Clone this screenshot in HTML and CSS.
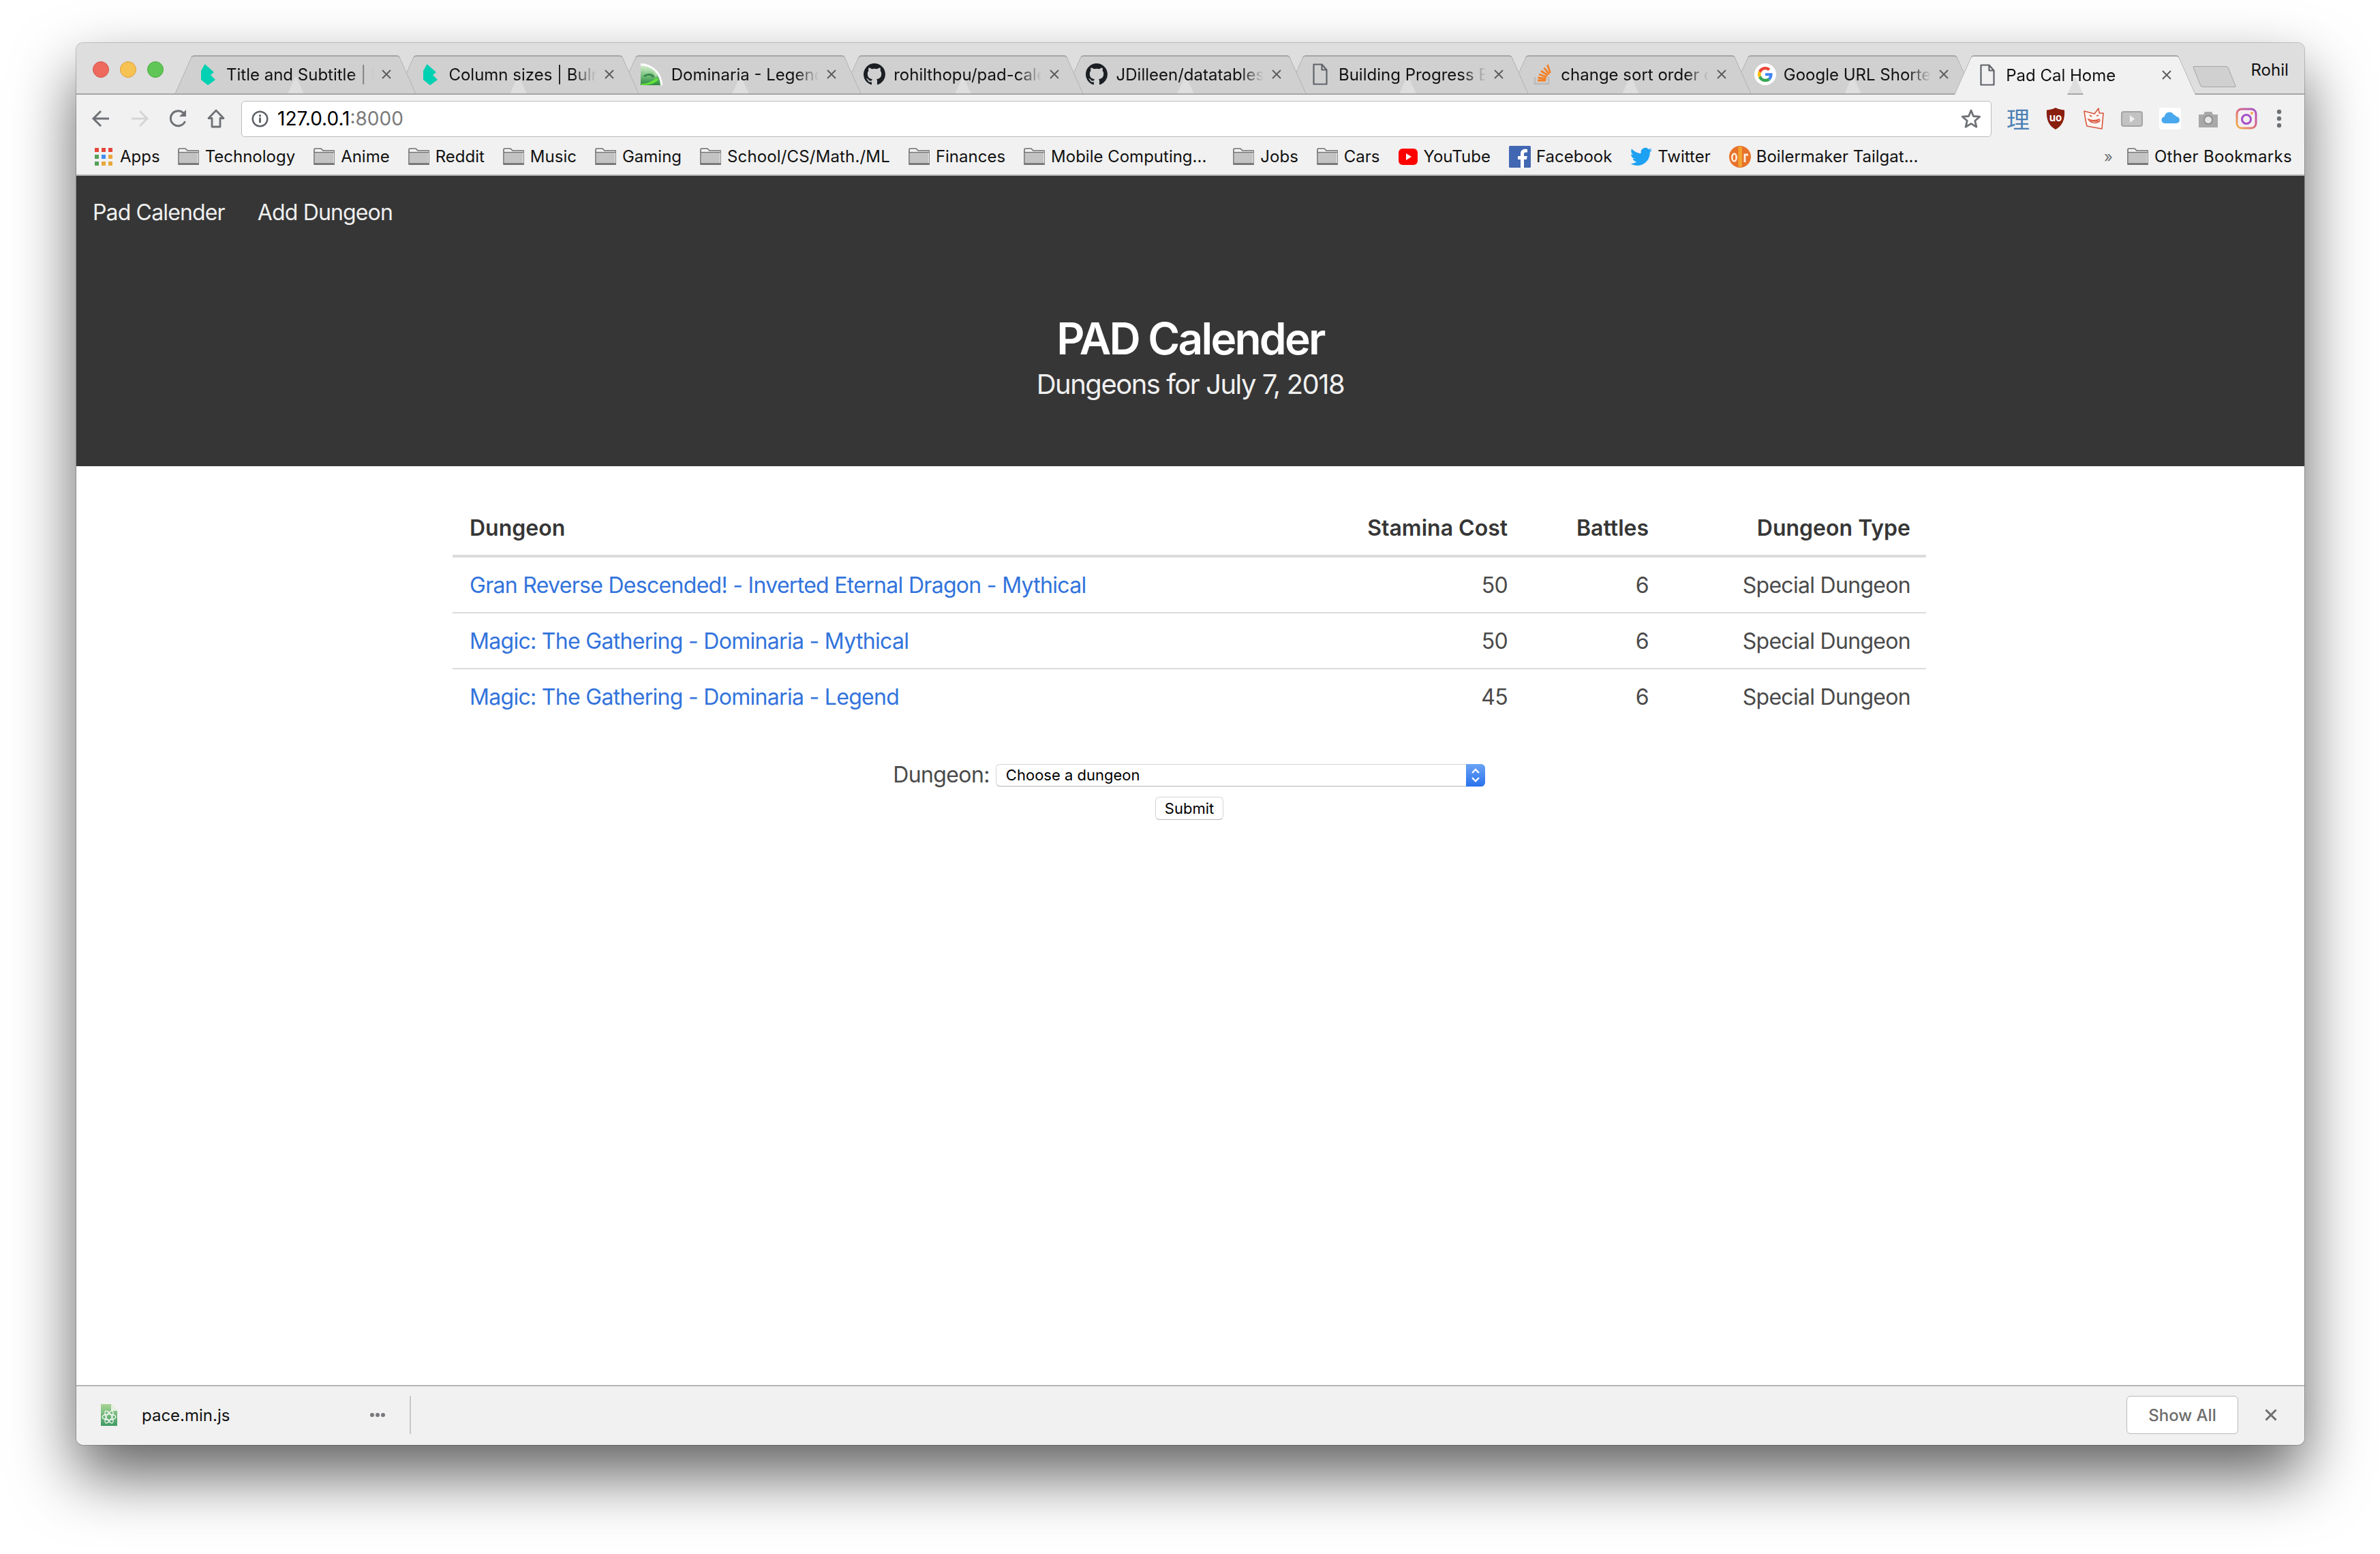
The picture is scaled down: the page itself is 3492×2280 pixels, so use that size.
FILE: index.html
```html
<!DOCTYPE html>
<html lang="en">
<head>
<meta charset="utf-8">
<title>Pad Cal Home</title>
<link rel="stylesheet" href="styles.css">
</head>
<body>
<svg class="defs" width="0" height="0">
  <defs>
    <symbol id="folder" viewBox="0 0 31 25">
      <path d="M1 24V2.500C1 1.600 1.600 1 2.500 1h8.500l3 3h15.500c.8 0 1.500.7 1.500 1.500V24z" fill="#f4f4f4" stroke="#6d6d6d" stroke-width="1.600"/>
      <rect x="1.800" y="7" width="27.400" height="16" fill="#c3c3c3"/>
      <path d="M1 6.500h29" stroke="#6d6d6d" stroke-width="1.300"/>
      <path d="M1 23.500h29.200" stroke="#6d6d6d" stroke-width="2.400"/>
    </symbol>
    <symbol id="bulma" viewBox="0 0 21 31">
      <path d="M5.500 0L19 12l-5 4 7 7-11 8L0 23V10z" fill="#00d1b2"/>
    </symbol>
    <symbol id="github" viewBox="0 0 16 16">
      <path fill="#1b1f23" fill-rule="evenodd" d="M8 0C3.580 0 0 3.580 0 8c0 3.540 2.290 6.530 5.470 7.590.4.070.55-.17.55-.38 0-.19-.01-.82-.01-1.490-2.010.37-2.530-.49-2.690-.94-.09-.23-.48-.94-.82-1.130-.28-.15-.68-.52-.01-.53.63-.01 1.080.58 1.230.82.72 1.210 1.870.87 2.330.66.070-.52.28-.87.51-1.070-1.780-.2-3.640-.89-3.640-3.950 0-.87.31-1.590.82-2.150-.08-.2-.36-1.020.08-2.120 0 0 .67-.21 2.200.82.64-.18 1.320-.27 2-.27.68 0 1.360.09 2 .27 1.530-1.040 2.200-.82 2.200-.82.44 1.100.16 1.920.08 2.120.51.56.82 1.270.82 2.150 0 3.070-1.870 3.750-3.650 3.950.29.25.54.73.54 1.480 0 1.070-.01 1.930-.01 2.200 0 .21.15.46.55.38A8.013 8.013 0 0016 8c0-4.420-3.580-8-8-8z"/>
    </symbol>
    <symbol id="doc" viewBox="0 0 22 32">
      <path d="M1.500 1.500h12l7 8v21h-19z M13.500 1.500v8h7" fill="none" stroke="#5f6368" stroke-width="2.200" stroke-linejoin="round"/>
    </symbol>
    <symbol id="tabx" viewBox="0 0 14 14">
      <path d="M1 1l12 12M13 1L1 13" stroke="#5a5a5a" stroke-width="1.800" fill="none"/>
    </symbol>
    <linearGradient id="swirl" x1="0" y1="0" x2="0" y2="1">
      <stop offset="0" stop-color="#d7efd0"/>
      <stop offset=".4" stop-color="#8ccb8e"/>
      <stop offset=".75" stop-color="#4fa45c"/>
      <stop offset="1" stop-color="#2f8a3f"/>
    </linearGradient>
    <linearGradient id="atomdoc" x1="0" y1="0" x2="0" y2="1">
      <stop offset="0" stop-color="#a8d595"/>
      <stop offset="1" stop-color="#3f9a63"/>
    </linearGradient>
    <linearGradient id="insta" x1="0" y1="1" x2="1" y2="0">
      <stop offset="0" stop-color="#f5b44a"/>
      <stop offset=".5" stop-color="#dc6a80"/>
      <stop offset="1" stop-color="#a650c8"/>
    </linearGradient>
  </defs>
</svg>

<div class="window">
  <header class="titlebar">
    <div class="lights">
      <span class="light light-red"></span>
      <span class="light light-yellow"></span>
      <span class="light light-green"></span>
    </div>
    <div class="tabs">
      <div class="tab">
        <span class="fav"><svg class="fav-bulma"><use href="#bulma"/></svg></span>
        <span class="tab-title">Title and Subtitle | Bulma</span>
        <svg class="tab-close"><use href="#tabx"/></svg>
      </div>
      <div class="tab">
        <span class="fav"><svg class="fav-bulma"><use href="#bulma"/></svg></span>
        <span class="tab-title">Column sizes | Bulma: Free</span>
        <svg class="tab-close"><use href="#tabx"/></svg>
      </div>
      <div class="tab">
        <span class="fav"><svg class="fav-full fav-dominaria" viewBox="0 0 32 32"><path d="M0 0A32 32 0 0 1 32 32H0z" fill="#fff"/><path d="M0 3A29 29 0 0 1 29 32H0z" fill="url(#swirl)"/><path d="M6 10c8-3 15 1 17 9" fill="none" stroke="#b5deb0" stroke-width="3"/><path d="M5 19c6-4 11-3 14 1" fill="none" stroke="#37874a" stroke-width="3"/><path d="M1 30c8 0 16-3 22-9l3 3c-5 5-11 8-25 8z" fill="#63e33c"/></svg></span>
        <span class="tab-title">Dominaria - Legend - PAD</span>
        <svg class="tab-close"><use href="#tabx"/></svg>
      </div>
      <div class="tab">
        <span class="fav"><svg class="fav-full fav-github"><use href="#github"/></svg></span>
        <span class="tab-title">rohilthopu/pad-calender</span>
        <svg class="tab-close"><use href="#tabx"/></svg>
      </div>
      <div class="tab">
        <span class="fav"><svg class="fav-full fav-github"><use href="#github"/></svg></span>
        <span class="tab-title">JDilleen/datatables-plugin</span>
        <svg class="tab-close"><use href="#tabx"/></svg>
      </div>
      <div class="tab">
        <span class="fav"><svg class="fav-doc"><use href="#doc"/></svg></span>
        <span class="tab-title">Building Progress Bar</span>
        <svg class="tab-close"><use href="#tabx"/></svg>
      </div>
      <div class="tab">
        <span class="fav"><svg class="fav-full" viewBox="0 0 32 32"><path d="M5 20v10h20V20" fill="none" stroke="#bcbbbb" stroke-width="2.600"/><path d="M9 25h12M9.500 21l12 1.500M11 16l11.500 4M14 11l10 6.500M18.500 6.500l7.500 9.500M23.500 2l4 12" stroke="#f48024" stroke-width="2.800" fill="none"/></svg></span>
        <span class="tab-title">change sort order of</span>
        <svg class="tab-close"><use href="#tabx"/></svg>
      </div>
      <div class="tab">
        <span class="fav"><svg class="fav-full" viewBox="0 0 32 32"><circle cx="16" cy="16" r="16" fill="#fff"/><g transform="translate(5 5) scale(.46)"><path fill="#EA4335" d="M24 9.500c3.500 0 6.700 1.200 9.200 3.600l6.900-6.900C35.900 2.400 30.500 0 24 0 14.600 0 6.500 5.400 2.600 13.200l8 6.200C12.400 13.700 17.700 9.500 24 9.500z"/><path fill="#4285F4" d="M47 24.500c0-1.600-.1-3.100-.4-4.500H24v9h12.900c-.6 3-2.200 5.500-4.700 7.200l7.700 6c4.500-4.200 7.100-10.300 7.100-17.700z"/><path fill="#FBBC05" d="M10.500 28.600c-.5-1.400-.8-3-.8-4.600s.3-3.200.8-4.600l-8-6.200C.9 16.500 0 20.100 0 24s.9 7.500 2.600 10.800l7.900-6.200z"/><path fill="#34A853" d="M24 48c6.500 0 11.900-2.100 15.900-5.800l-7.700-6c-2.200 1.400-4.900 2.300-8.200 2.300-6.300 0-11.600-4.200-13.500-9.900l-8 6.200C6.500 42.600 14.600 48 24 48z"/></g></svg></span>
        <span class="tab-title">Google URL Shortener</span>
        <svg class="tab-close"><use href="#tabx"/></svg>
      </div>
      <div class="tab tab-active">
        <span class="fav"><svg class="fav-doc"><use href="#doc"/></svg></span>
        <span class="tab-title">Pad Cal Home</span>
        <svg class="tab-close"><use href="#tabx"/></svg>
      </div>
    </div>
    <span class="new-tab"></span>
    <span class="profile">Rohil</span>
  </header>

  <div class="toolbar">
    <div class="nav-icons">
      <svg class="nav-icon" viewBox="0 0 28 28"><path d="M26 14H4M14 3L3 14l11 11" fill="none" stroke="#6e7175" stroke-width="3"/></svg>
      <svg class="nav-icon" viewBox="0 0 28 28"><path d="M2 14h22M14 3l11 11-11 11" fill="none" stroke="#d5d5d5" stroke-width="3"/></svg>
      <svg class="nav-icon" viewBox="0 0 28 28"><path d="M23.500 18a11 11 0 1 1-1-10.500" fill="none" stroke="#6e7175" stroke-width="3"/><path d="M25 1v10H15z" fill="#6e7175"/></svg>
      <svg class="nav-icon nav-home" viewBox="0 0 28 28"><path d="M14 2L3 13.500h5V26h12V13.500h5z" fill="none" stroke="#6e7175" stroke-width="2.800" stroke-linejoin="round"/></svg>
    </div>
    <div class="omnibox">
      <svg class="info" viewBox="0 0 26 26"><circle cx="13" cy="13" r="11.200" fill="none" stroke="#5f6368" stroke-width="2.600"/><path d="M11.500 11h3v8h-3zM11.500 6.500h3v3h-3z" fill="#5f6368"/></svg>
      <span class="url">127.0.0.1<span class="url-port">:8000</span></span>
      <svg class="star" viewBox="0 0 30 30"><path d="M15 3l3.500 8.500 9.200.7-7 6 2.200 9L15 22.400 7.100 27.200l2.200-9-7-6 9.200-.7z" fill="none" stroke="#6e7175" stroke-width="2.800" stroke-linejoin="round"/></svg>
    </div>
    <div class="extensions">
      <span class="ext ext-li">理</span>
      <svg class="ext" viewBox="0 0 32 32"><path d="M16 0c3 2 8 3 13 3.500 1 14-3 23-13 28.500C6 26.500 2 17.500 3 3.500 8 3 13 2 16 0z" fill="#8a1f0f"/><text class="ub-text" x="16" y="20" text-anchor="middle">uo</text></svg>
      <svg class="ext" viewBox="0 0 32 32"><path d="M2 5l15 4 6-8 1 7 6 0-2 23-22-4C4 20 3 12 2 5z" fill="#fdf6f3" stroke="#d8563f" stroke-width="1.600" stroke-linejoin="round"/><path d="M8 17c3 6 13 7 17 2l-1-2c-5 2-11 2-16 0zM10 20l13-.5" stroke="#d8563f" stroke-width="1.400" fill="none"/><path d="M10 11l3 2M20 12l3-1" stroke="#d8563f" stroke-width="1.800" fill="none"/></svg>
      <svg class="ext" viewBox="0 0 32 32"><rect x="1" y="6" width="30" height="21" rx="3" fill="#c3c3c3" stroke="#a4a4a4" stroke-width="2"/><path d="M13 11l7 5.500-7 5.500z" fill="#f2f2f2"/></svg>
      <svg class="ext" viewBox="0 0 32 32"><rect width="32" height="32" rx="4" fill="#fff"/><path d="M9 23a5 5 0 0 1-1-10 7 7 0 0 1 13-3 6 6 0 0 1 4 3 5 5 0 0 1 0 10z" fill="#4aa8ee"/></svg>
      <svg class="ext" viewBox="0 0 32 32"><path d="M2 10h7l2-4h10l2 4h7v19H2z" fill="#a8a8a8"/><circle cx="16" cy="18" r="6" fill="#e6e6e6" stroke="#8e8e8e" stroke-width="2"/></svg>
      <svg class="ext" viewBox="0 0 32 32"><rect x="2" y="2" width="28" height="28" rx="7" fill="#f4f0f2" stroke="url(#insta)" stroke-width="3"/><circle cx="16" cy="17" r="6.500" fill="none" stroke="#a650c8" stroke-width="3"/><circle cx="24" cy="8" r="2" fill="#f5a742"/></svg>
      <svg class="ext-menu" viewBox="0 0 16 28"><circle cx="8" cy="4" r="3.200" fill="#6e7175"/><circle cx="8" cy="14" r="3.200" fill="#6e7175"/><circle cx="8" cy="24" r="3.200" fill="#6e7175"/></svg>
    </div>
  </div>

  <nav class="bookmarks">
    <a class="bm bm-first"><svg class="bm-apps" viewBox="0 0 26 26"><g><rect x="0" y="0" width="6" height="6" fill="#e5473a"/><rect x="10" y="0" width="6" height="6" fill="#e5473a"/><rect x="20" y="0" width="6" height="6" fill="#e5473a"/><rect x="0" y="10" width="6" height="6" fill="#55a05a"/><rect x="10" y="10" width="6" height="6" fill="#3f8ef0"/><rect x="20" y="10" width="6" height="6" fill="#e8a73a"/><rect x="0" y="20" width="6" height="6" fill="#55a05a"/><rect x="10" y="20" width="6" height="6" fill="#e8a73a"/><rect x="20" y="20" width="6" height="6" fill="#e8a73a"/></g></svg>Apps</a>
    <a class="bm"><svg class="bm-folder"><use href="#folder"/></svg>Technology</a>
    <a class="bm"><svg class="bm-folder"><use href="#folder"/></svg>Anime</a>
    <a class="bm"><svg class="bm-folder"><use href="#folder"/></svg>Reddit</a>
    <a class="bm"><svg class="bm-folder"><use href="#folder"/></svg>Music</a>
    <a class="bm"><svg class="bm-folder"><use href="#folder"/></svg>Gaming</a>
    <a class="bm bm-school"><svg class="bm-folder"><use href="#folder"/></svg>School/CS/Math./ML</a>
    <a class="bm"><svg class="bm-folder"><use href="#folder"/></svg>Finances</a>
    <a class="bm bm-wide"><svg class="bm-folder"><use href="#folder"/></svg>Mobile Computing...</a>
    <a class="bm"><svg class="bm-folder"><use href="#folder"/></svg>Jobs</a>
    <a class="bm"><svg class="bm-folder"><use href="#folder"/></svg>Cars</a>
    <a class="bm"><svg class="bm-yt" viewBox="0 0 28 24"><rect width="28" height="24" rx="6" fill="#f00"/><path d="M11 7l8 5-8 5z" fill="#fff"/></svg>YouTube</a>
    <a class="bm"><svg class="bm-icon" viewBox="0 0 32 32"><rect width="32" height="32" rx="1.500" fill="#4267b2"/><path d="M22 32V20h4l.7-5H22v-3c0-1.500.6-2.500 2.500-2.500H27V5c-.8-.1-2-.2-3.500-.2-3.600 0-6.500 2.200-6.500 6.500V15h-4v5h4v12z" fill="#fff"/></svg>Facebook</a>
    <a class="bm"><svg class="bm-icon" viewBox="0 0 24 24"><path fill="#1da1f2" d="M23.953 4.570a10 10 0 01-2.825.775 4.958 4.958 0 002.163-2.723c-.951.555-2.005.959-3.127 1.184a4.920 4.920 0 00-8.384 4.482C7.690 8.095 4.067 6.130 1.640 3.162a4.822 4.822 0 00-.666 2.475c0 1.710.870 3.213 2.188 4.096a4.904 4.904 0 01-2.228-.616v.060a4.923 4.923 0 003.946 4.827 4.996 4.996 0 01-2.212.085 4.936 4.936 0 004.604 3.417 9.867 9.867 0 01-6.102 2.105c-.390 0-.779-.023-1.170-.067a13.995 13.995 0 007.557 2.209c9.053 0 13.998-7.496 13.998-13.985 0-.210 0-.420-.015-.630A9.935 9.935 0 0024 4.590z"/></svg>Twitter</a>
    <a class="bm"><svg class="bm-icon" viewBox="0 0 32 32"><circle cx="16" cy="16" r="16" fill="#e8722a"/><rect x="13.500" y="1" width="5.500" height="30" rx="2" fill="#f2a531"/><ellipse cx="7.500" cy="17" rx="3.200" ry="5.500" fill="none" stroke="#fdeede" stroke-width="2.600"/><path d="M23 24V13h5" fill="none" stroke="#fdeede" stroke-width="2.800"/></svg>Boilermaker Tailgat...</a>
    <span class="bm-more">»</span>
    <a class="bm bm-last"><svg class="bm-folder"><use href="#folder"/></svg>Other Bookmarks</a>
  </nav>

  <main class="page">
    <section class="hero">
      <div class="hero-nav">
        <a class="hero-link">Pad Calender</a>
        <a class="hero-link">Add Dungeon</a>
      </div>
      <div class="hero-body">
        <h1 class="hero-title">PAD Calender</h1>
        <h2 class="hero-subtitle">Dungeons for July 7, 2018</h2>
      </div>
    </section>

    <section class="content">
      <table class="dungeons">
        <colgroup>
          <col class="col-name">
          <col class="col-stamina">
          <col class="col-battles">
          <col class="col-type">
        </colgroup>
        <thead>
          <tr>
            <th>Dungeon</th>
            <th class="num">Stamina Cost</th>
            <th class="num">Battles</th>
            <th class="num">Dungeon Type</th>
          </tr>
        </thead>
        <tbody>
          <tr>
            <td><a class="link">Gran Reverse Descended! - Inverted Eternal Dragon - Mythical</a></td>
            <td class="num">50</td>
            <td class="num">6</td>
            <td class="num">Special Dungeon</td>
          </tr>
          <tr>
            <td><a class="link">Magic: The Gathering - Dominaria - Mythical</a></td>
            <td class="num">50</td>
            <td class="num">6</td>
            <td class="num">Special Dungeon</td>
          </tr>
          <tr>
            <td><a class="link">Magic: The Gathering - Dominaria - Legend</a></td>
            <td class="num">45</td>
            <td class="num">6</td>
            <td class="num">Special Dungeon</td>
          </tr>
        </tbody>
      </table>

      <form class="pick">
        <div class="pick-row">
          <label class="pick-label" for="dungeon">Dungeon:</label>
          <span class="select-wrap">
            <select class="select" id="dungeon"><option>Choose a dungeon</option></select>
            <svg class="select-arrows" viewBox="0 0 28 33"><path d="M9 13l5-5 5 5M9 20l5 5 5-5" fill="none" stroke="#fff" stroke-width="2.400"/></svg>
          </span>
        </div>
        <button class="submit" type="button">Submit</button>
      </form>
    </section>
  </main>

  <footer class="downloads">
    <svg class="dl-icon" viewBox="0 0 24 32"><path d="M0 0h15l9 10v22H0z" fill="url(#atomdoc)"/><path d="M15 0l9 10h-9z" fill="#e6efe2"/><g fill="none" stroke="#fff" stroke-width="1.200"><ellipse cx="12" cy="19" rx="10" ry="4"/><ellipse cx="12" cy="19" rx="10" ry="4" transform="rotate(60 12 19)"/><ellipse cx="12" cy="19" rx="10" ry="4" transform="rotate(120 12 19)"/></g></svg>
    <span class="dl-name">pace.min.js</span>
    <svg class="dl-more" viewBox="0 0 22 6"><circle cx="3" cy="3" r="3" fill="#77797c"/><circle cx="11" cy="3" r="3" fill="#77797c"/><circle cx="19" cy="3" r="3" fill="#77797c"/></svg>
    <span class="dl-sep"></span>
    <button class="show-all" type="button">Show All</button>
    <svg class="dl-close" viewBox="0 0 18 18"><path d="M1.500 1.500l15 15M16.500 1.500l-15 15" stroke="#6e6e6e" stroke-width="3" fill="none"/></svg>
  </footer>
</div>
</body>
</html>
```

FILE: styles.css
```css
* { box-sizing: border-box; }

html, body {
  margin: 0;
  padding: 0;
  background: #fff;
  width: 3492px;
  height: 2280px;
  overflow: hidden;
}

body {
  padding: 63px 0 0 112px;
  font-family: Inter, "Liberation Sans", sans-serif;
  color: #000;
}

.defs { position: absolute; }

.window {
  width: 3269px;
  height: 2057px;
  display: flex;
  flex-direction: column;
  border-radius: 10px;
  background: #f1f1f1;
  box-shadow: 0 0 0 1px rgba(0, 0, 0, .2), 0 44px 92px rgba(0, 0, 0, .62);
}

/* title bar */
.titlebar {
  height: 76px;
  flex: none;
  display: flex;
  align-items: flex-end;
  background: #dedede;
  border-bottom: 2px solid #a6a6a6;
  border-radius: 10px 10px 0 0;
}

.lights {
  display: flex;
  gap: 16px;
  align-self: flex-start;
  margin: 27px 16px 0 24px;
}

.light {
  width: 24px;
  height: 24px;
  border-radius: 50%;
}
.light-red { background: #ee6a5f; border: 1px solid #d4544b; }
.light-yellow { background: #f6c251; border: 1px solid #dca03c; }
.light-green { background: #60c655; border: 1px solid #4aa93f; }

.tabs { display: flex; }

.tab {
  position: relative;
  width: 354.400px;
  height: 56px;
  margin-right: -28px;
  padding: 0 31px 0 33px;
  display: flex;
  align-items: center;
  font-size: 24px;
  isolation: isolate;
}
.tab:nth-child(1) { z-index: 8; }
.tab:nth-child(2) { z-index: 7; }
.tab:nth-child(3) { z-index: 6; }
.tab:nth-child(4) { z-index: 5; }
.tab:nth-child(5) { z-index: 4; }
.tab:nth-child(6) { z-index: 3; }
.tab:nth-child(7) { z-index: 2; }
.tab:nth-child(8) { z-index: 1; }
.tab.tab-active { z-index: 9; height: 58px; margin-bottom: -2px; }

.tab::before,
.tab::after {
  content: "";
  position: absolute;
  top: 0;
  bottom: 0;
  z-index: -1;
  background: #d0d0d0;
  border-top: 2px solid #a5a5a5;
}
.tab::before {
  left: 12.500px;
  right: calc(50% - 1px);
  transform: skewX(-24deg);
  border-left: 1.500px solid #a5a5a5;
  border-top-left-radius: 4px;
}
.tab::after {
  left: 50%;
  right: 12.500px;
  transform: skewX(24deg);
  border-right: 1.500px solid #a5a5a5;
  border-top-right-radius: 4px;
}
.tab-active::before,
.tab-active::after { background: #f1f1f1; }

.fav {
  width: 32px;
  height: 32px;
  flex: none;
  margin-right: 11px;
  display: flex;
  align-items: center;
  justify-content: center;
}
.fav-bulma { width: 21px; height: 31px; }
.fav-full { width: 32px; height: 32px; }
.fav-dominaria { margin-left: -3px; flex: none; }
.fav-github { margin-left: -3px; flex: none; }
.fav-doc { width: 22px; height: 32px; }

.tab-title {
  flex: 1;
  min-width: 0;
  overflow: hidden;
  white-space: nowrap;
  color: #111;
  -webkit-mask-image: linear-gradient(to right, #000 calc(100% - 34px), transparent);
  mask-image: linear-gradient(to right, #000 calc(100% - 34px), transparent);
}

.tab-close {
  width: 14px;
  height: 14px;
  flex: none;
  margin: 0 5px 0 12px;
}

.new-tab {
  width: 52px;
  height: 31px;
  flex: none;
  margin: 0 0 9px 29px;
  background: #d0d0d0;
  border: 1.500px solid #a5a5a5;
  border-radius: 3px;
  transform: skewX(22deg);
}

.profile {
  align-self: flex-start;
  margin: 25px 0 0 28px;
  font-size: 24px;
  line-height: 30px;
  color: #111;
}

/* toolbar */
.toolbar {
  height: 69px;
  flex: none;
  display: flex;
  align-items: center;
  padding: 1px 29px 0 22px;
  background: #f1f1f1;
}

.nav-icons { display: flex; gap: 29px; }
.nav-icon { width: 28px; height: 28px; }
.nav-home { margin-left: -2px; }

.omnibox {
  flex: 1;
  height: 53px;
  margin: 0 22px 0 23px;
  padding: 0 14px;
  display: flex;
  align-items: center;
  gap: 13px;
  background: #fff;
  border: 1.500px solid #bcbcbc;
  border-radius: 5px;
}
.info { width: 25px; height: 25px; flex: none; }
.url { font-size: 28px; color: #000; }
.url-port { color: #7a7a7a; }
.star { width: 30px; height: 30px; margin-left: auto; }

.extensions { display: flex; align-items: center; gap: 24px; }
.ext { width: 32px; height: 32px; flex: none; }
.ext-li {
  font-family: "Noto Sans CJK SC", sans-serif;
  font-size: 34px;
  line-height: 32px;
  color: #4a7fb5;
}
.ub-text { font: 700 15px Inter, sans-serif; fill: #fff; }
.ext-menu { width: 16px; height: 28px; flex: none; }

/* bookmarks */
.bookmarks {
  height: 50px;
  flex: none;
  display: flex;
  align-items: center;
  gap: 27px;
  padding: 0 18px 5px 27px;
  background: #f1f1f1;
  border-bottom: 2px solid #b2b2b2;
  font-size: 24px;
  color: #111;
}
.bm {
  display: flex;
  align-items: center;
  gap: 9px;
  white-space: nowrap;
}
.bm-first { gap: 11px; margin-right: -1px; }
.bm-school { letter-spacing: .15px; }
.bm-apps { width: 26px; height: 26px; }
.bm-folder { width: 31px; height: 25px; }
.bm-yt { width: 28px; height: 24px; }
.bm-icon { width: 32px; height: 32px; margin-right: -1px; }
.bm-wide { margin-right: 12px; }
.bm-more { margin-left: auto; color: #6e7175; font-size: 22px; }
.bm-last { margin-left: -6px; letter-spacing: .3px; }

/* page */
.page {
  flex: 1;
  min-height: 0;
  background: #fff;
  display: flex;
  flex-direction: column;
}

.hero {
  height: 426px;
  flex: none;
  background: #363636;
  display: flex;
  flex-direction: column;
}

.hero-nav {
  height: 107px;
  display: flex;
  align-items: center;
  gap: 48px;
  padding-left: 24px;
}
.hero-link { font-size: 32px; color: #f0f0f0; letter-spacing: -.85px; }

.hero-body {
  flex: 1;
  display: flex;
  flex-direction: column;
  align-items: center;
  padding-top: 92px;
}
.hero-title {
  margin: 0;
  font-size: 64px;
  line-height: 80px;
  font-weight: 600;
  color: #fff;
  letter-spacing: -2.800px;
}
.hero-subtitle {
  margin: 2px 0 0;
  font-size: 40px;
  line-height: 50px;
  font-weight: 400;
  color: #f0f0f0;
  letter-spacing: -1.500px;
}

.content {
  padding: 50px 0 0 552px;
}

.dungeons {
  width: 2162px;
  table-layout: fixed;
  border-collapse: separate;
  border-spacing: 0;
  font-size: 32px;
  line-height: 48px;
  color: #4a4a4a;
}
.col-name { width: 1300px; }
.col-stamina { width: 271px; }
.col-battles { width: 207px; }
.col-type { width: 384px; }

.dungeons th,
.dungeons td {
  padding: 17px 23px 15px 25px;
  text-align: left;
  border-bottom: 2px solid #dbdbdb;
  white-space: nowrap;
}
.dungeons td { letter-spacing: -.7px; }
.dungeons th {
  border-bottom-width: 4px;
  font-weight: 600;
  color: #363636;
}
.dungeons tbody tr:last-child td { border-bottom: 0; }
.dungeons .num { text-align: right; }
.link { color: #3273dc; }

.pick {
  width: 2162px;
  margin-top: 56px;
  display: flex;
  flex-direction: column;
  align-items: center;
  gap: 15px;
}
.pick-row {
  display: flex;
  align-items: center;
  gap: 9px;
  margin-left: -1px;
  height: 36px;
}
.pick-label { font-size: 32px; color: #4a4a4a; letter-spacing: -.6px; }

.select-wrap { position: relative; display: block; width: 718px; height: 33px; margin-top: 2px; }
.select {
  appearance: none;
  -webkit-appearance: none;
  display: block;
  width: 100%;
  height: 100%;
  padding: 0 40px 0 14px;
  font: 22px Inter, sans-serif;
  color: #000;
  background: #fff;
  border: 1px solid #d4d4d4;
  border-bottom-color: #b5b5b5;
  border-radius: 6px;
}
.select-arrows {
  position: absolute;
  top: 0;
  right: 0;
  width: 28px;
  height: 33px;
  background: linear-gradient(#6aa3f5, #2a72ee);
  border-radius: 0 6px 6px 0;
}

.submit {
  width: 100px;
  height: 34px;
  padding: 0;
  font: 22px Inter, sans-serif;
  color: #000;
  background: #fff;
  border: 1px solid #d4d4d4;
  border-bottom-color: #b5b5b5;
  border-radius: 6px;
}

/* download shelf */
.downloads {
  height: 88px;
  flex: none;
  display: flex;
  align-items: center;
  padding: 0 40px 2px 36px;
  background: #f1f1f1;
  border-top: 2px solid #b5b5b5;
  border-radius: 0 0 10px 10px;
}
.dl-icon { width: 24px; height: 32px; flex: none; }
.dl-name { margin-left: 36px; font-size: 24px; color: #111; width: 335px; }
.dl-more { width: 22px; height: 6px; flex: none; }
.dl-sep { width: 2px; height: 56px; margin-left: 36px; background: #c8c8c8; }
.show-all {
  margin-left: auto;
  width: 164px;
  height: 56px;
  padding: 0;
  font: 500 24px Inter, sans-serif;
  color: #6d6d6d;
  background: #fff;
  border: 1.500px solid #b8b8b8;
  border-radius: 6px;
}
.dl-close { width: 18px; height: 18px; margin-left: 39px; flex: none; }
```
